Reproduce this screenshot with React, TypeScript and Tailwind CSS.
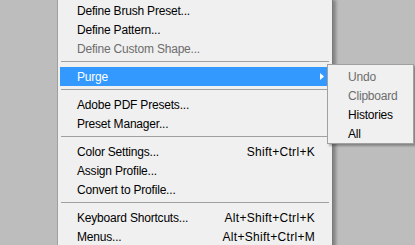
import React from 'react'

type Row =
  | { kind: 'item'; label: string; shortcut?: string; disabled?: boolean; active?: boolean; submenu?: boolean }
  | { kind: 'sep' }

const rows: Row[] = [
  { kind: 'item', label: 'Define Brush Preset...' },
  { kind: 'item', label: 'Define Pattern...' },
  { kind: 'item', label: 'Define Custom Shape...', disabled: true },
  { kind: 'sep' },
  { kind: 'item', label: 'Purge', active: true, submenu: true },
  { kind: 'sep' },
  { kind: 'item', label: 'Adobe PDF Presets...' },
  { kind: 'item', label: 'Preset Manager...' },
  { kind: 'sep' },
  { kind: 'item', label: 'Color Settings...', shortcut: 'Shift+Ctrl+K' },
  { kind: 'item', label: 'Assign Profile...' },
  { kind: 'item', label: 'Convert to Profile...' },
  { kind: 'sep' },
  { kind: 'item', label: 'Keyboard Shortcuts...', shortcut: 'Alt+Shift+Ctrl+K' },
  { kind: 'item', label: 'Menus...', shortcut: 'Alt+Shift+Ctrl+M' },
]

const purgeItems = [
  { label: 'Undo', disabled: true },
  { label: 'Clipboard', disabled: true },
  { label: 'Histories' },
  { label: 'All' },
]

function MenuRow({ row }: { row: Row }) {
  if (row.kind === 'sep') {
    return (
      <div className="h-[9px] px-[3px] pt-[3px]">
        <div className="h-px bg-[#a0a0a0]" />
      </div>
    )
  }
  return (
    <div
      className={`mx-[2px] h-[19px] flex items-center pl-[17px] pr-[15px] ${
        row.active ? 'bg-[#3399ff] text-white' : row.disabled ? 'text-[#6d6d6d]' : 'text-black'
      }`}
    >
      <span className="flex-1 whitespace-nowrap tracking-[-0.2px]">{row.label}</span>
      {row.shortcut && <span className="whitespace-nowrap tracking-[0.3px]">{row.shortcut}</span>}
      {row.submenu && (
        <svg width="4" height="7" viewBox="0 0 4 7" className="mr-[-9px]">
          <path d="M0 0 L4 3.5 L0 7 Z" fill="#ffffff" />
        </svg>
      )}
    </div>
  )
}

export default function App() {
  return (
    <div
      className="w-[415px] h-[245px] overflow-hidden bg-[#bdbdbd] text-[12px] leading-none"
      style={{ fontFamily: '"Liberation Sans", Arial, sans-serif' }}
    >
      <div className="relative ml-[57px] w-[276px] h-[260px] bg-[#f0f0f0] border-l border-l-[#a0a0a0] border-r border-r-[#7a7a7a] shadow-[3px_0_3px_rgba(0,0,0,0.3)] pt-[1px]">
        {rows.map((row, i) => (
          <MenuRow key={i} row={row} />
        ))}

        <div className="absolute left-[269px] top-[64px] w-[87px] h-[80px] bg-[#f0f0f0] border border-[#a0a0a0] pt-[2px] shadow-[2px_2px_2px_rgba(0,0,0,0.3)]">
          {purgeItems.map((it) => (
            <div
              key={it.label}
              className={`h-[19px] flex items-center pl-[20px] whitespace-nowrap tracking-[-0.2px] ${
                it.disabled ? 'text-[#6d6d6d]' : 'text-black'
              }`}
            >
              {it.label}
            </div>
          ))}
        </div>
      </div>
    </div>
  )
}
